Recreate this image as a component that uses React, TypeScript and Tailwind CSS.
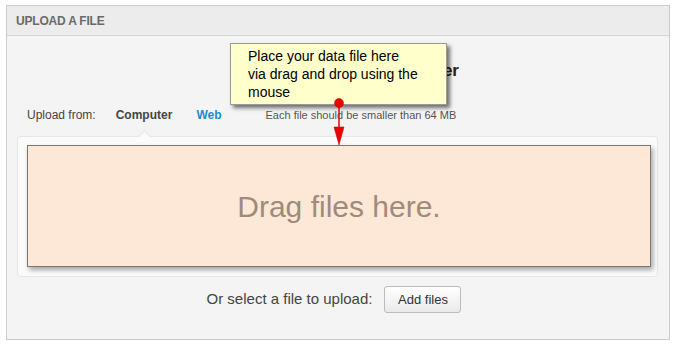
export default function App() {
  return (
    <div className="w-[677px] h-[347px] bg-white pt-[5px] pl-[6px] font-['Liberation_Sans',Arial,sans-serif]">
      <div className="relative w-[664px] h-[335px] border border-[#cccccc] bg-[#f4f4f4] flex flex-col">
        <div className="h-[30px] shrink-0 bg-[#ececec] border-b border-[#d6d6d6] pl-[9px] flex items-center text-[12px] font-bold text-[#6a6a6a] tracking-[-0.2px]">
          UPLOAD A FILE
        </div>

        <h2 className="mt-[24px] h-[22px] leading-[22px] text-right pr-[210px] text-[17px] font-bold text-[#222222]">
          Upload from your computer
        </h2>

        <div className="mt-[25px] h-[16px] flex items-center text-[12px] pl-[20px]">
          <span className="text-[#444444]">Upload from:</span>
          <span className="ml-[20px] font-bold text-[#444444]">Computer</span>
          <span className="ml-[24px] font-bold text-[#1d8bd6]">Web</span>
          <span className="ml-[44px] text-[11px] text-[#555555]">Each file should be smaller than 64 MB</span>
        </div>

        <div className="relative mt-[13px] ml-[10px] w-[641px] h-[141px] bg-[#fbfbfb] border border-[#e6e6e6] rounded-[4px] pt-[8px] pl-[9px]">
          <div className="absolute left-[122px] -top-[5px] w-[9px] h-[9px] rotate-45 bg-[#fbfbfb] border-l border-t border-[#e6e6e6]" />
          <div className="relative w-[624px] h-[122px] bg-[#fde8d7] border border-[#777777] shadow-[2px_3px_5px_rgba(0,0,0,0.35)] flex items-center justify-center">
            <span className="text-[30px] text-[#a08b7b]">Drag files here.</span>
          </div>
        </div>

        <div className="mt-[9px] flex items-center justify-center pr-[8px]">
          <span className="text-[15px] text-[#444444]">Or select a file to upload:</span>
          <button className="ml-[12px] w-[77px] h-[27px] rounded-[3px] border border-[#bbbbbb] bg-gradient-to-b from-white to-[#e9e9e9] text-[13px] text-[#333333]">
            Add files
          </button>
        </div>

        <div className="absolute left-[223px] top-[37px] w-[217px] h-[62px] bg-[#ffffcc] border border-[#999999] shadow-[3px_3px_4px_rgba(0,0,0,0.55)] pl-[17px] pt-[3px] text-[14px] leading-[18px] text-black">
          Place your data file here
          <br />
          via drag and drop using the
          <br />
          mouse
        </div>

        <svg className="absolute left-[324px] top-[91px]" width="16" height="50" viewBox="0 0 16 50">
          <line x1="8" y1="6" x2="8" y2="34" stroke="#ee0000" strokeWidth="1.5" />
          <circle cx="8" cy="6" r="4.5" fill="#ee0000" stroke="#b00000" strokeWidth="0.5" />
          <path d="M3 30 L13 30 L8 48 Z" fill="#ee0000" stroke="#b00000" strokeWidth="0.5" />
        </svg>
      </div>
    </div>
  )
}
